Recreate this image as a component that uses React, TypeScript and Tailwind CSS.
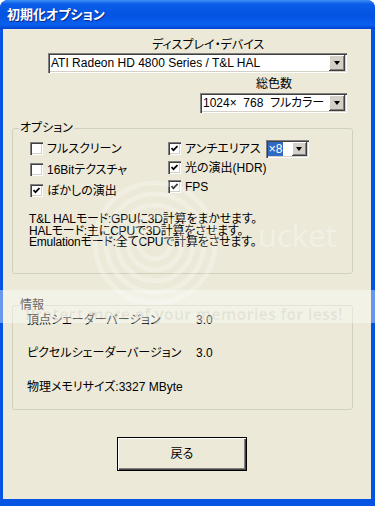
import type { ReactNode } from "react";

const DropButton = ({ className = "" }: { className?: string }) => (
  <div
    className={`flex items-center justify-center bg-[#D4D0C8] shadow-[inset_-1px_-1px_0_#404040,inset_1px_1px_0_#ffffff,inset_-2px_-2px_0_#808080] ${className}`}
  >
    <div className="h-0 w-0 border-x-[3.5px] border-t-[4px] border-x-transparent border-t-black" />
  </div>
);

type ComboProps = {
  children: ReactNode;
  className?: string;
};

const Combo = ({ children, className = "" }: ComboProps) => (
  <div
    className={`flex items-center bg-white shadow-[inset_1px_1px_0_#808080,inset_2px_2px_0_#404040,inset_-1px_-1px_0_#ffffff,inset_-2px_-2px_0_#D4D0C8] ${className}`}
  >
    <div className="flex-1 pl-[3px] text-[12px] leading-[14px] whitespace-pre">{children}</div>
    <DropButton className="mr-[2px] h-[16px] w-[16px]" />
  </div>
);

const Check = ({ checked, label }: { checked?: boolean; label: ReactNode }) => (
  <div className="flex items-center gap-[4px]">
    <div className="flex h-[13px] w-[13px] items-center justify-center bg-white shadow-[inset_1px_1px_0_#808080,inset_2px_2px_0_#404040,inset_-1px_-1px_0_#ffffff,inset_-2px_-2px_0_#D4D0C8]">
      {checked && (
        <svg width="7" height="7" viewBox="0 0 7 7">
          <polyline points="0.5,3 2.5,5.2 6.5,1" fill="none" stroke="black" strokeWidth="1.7" />
        </svg>
      )}
    </div>
    <span className="text-[12px] leading-[14px] whitespace-nowrap">{label}</span>
  </div>
);

export default function App() {
  return (
    <div className="relative h-[506px] w-[375px] overflow-hidden bg-white font-['Liberation_Sans','Noto_Sans_CJK_JP',sans-serif] text-black [font-feature-settings:'palt']">
      <div className="flex h-full flex-col rounded-t-[8px] bg-[#0553E3]">
        {/* title bar */}
        <div className="flex h-[29px] items-center rounded-t-[8px] bg-[linear-gradient(to_bottom,#3D8FF5_0%,#0A5DE8_14%,#0453E4_55%,#0A60EE_85%,#0343D0_100%)] pl-[7px]">
          <span className="text-[13px] font-bold leading-[14px] text-white [text-shadow:1px_1px_0_#0A2A8A]">
            初期化オプション
          </span>
        </div>

        <div className="mb-[7px] ml-[3px] mr-[4px] flex flex-1 flex-col bg-[#ECE9D8]">
          <div className="pl-[149px] pt-[9px] text-[12px] leading-[14px]">ディスプレイ・デバイス</div>
          <Combo className="ml-[45px] mt-[1px] h-[20px] w-[299px]">ATI Radeon HD 4800 Series / T&amp;L HAL</Combo>

          <div className="mt-[4px] pl-[253px] text-[12px] leading-[14px]">総色数</div>
          <Combo className="ml-[197px] mt-[2px] h-[20px] w-[147px]">{"1024×  768  フルカラー"}</Combo>

          {/* options group */}
          <fieldset className="ml-[9px] mt-[8px] h-[153px] w-[341px] rounded-[3px] border border-[#D0D0BF]">
            <legend className="ml-[6px] px-[1px] text-[12px] leading-[14px]">オプション</legend>
            <div className="flex items-start">
              <div className="flex w-[155px] flex-col pl-[17px] pt-[3px]">
                <div className="flex h-[21px] items-center">
                  <Check label="フルスクリーン" />
                </div>
                <div className="flex h-[21px] items-center">
                  <Check label="16Bitテクスチャ" />
                </div>
                <div className="flex h-[21px] items-center">
                  <Check checked label="ぼかしの演出" />
                </div>
              </div>
              <div className="flex flex-col pt-[4px]">
                <div className="flex h-[19px] items-center">
                  <Check checked label="アンチエリアス" />
                  <div className="ml-[5px] flex h-[18px] w-[43px] items-center bg-white shadow-[inset_1px_1px_0_#808080,inset_2px_2px_0_#404040,inset_-1px_-1px_0_#ffffff,inset_-2px_-2px_0_#D4D0C8]">
                    <span className="ml-[2px] bg-[#316AC5] px-[1px] text-[12px] leading-[14px] text-white">×8</span>
                    <DropButton className="ml-auto mr-[2px] h-[14px] w-[15px]" />
                  </div>
                </div>
                <div className="flex h-[19px] items-center">
                  <Check checked label="光の演出(HDR)" />
                </div>
                <div className="flex h-[19px] items-center">
                  <Check checked label="FPS" />
                </div>
              </div>
            </div>
            <div className="mt-[13px] pl-[16px] text-[12px] leading-[11.5px] tracking-[-0.2px]">
              <div>T&amp;L HALモード:GPUに3D計算をまかせます。</div>
              <div>HALモード:主にCPUで3D計算をさせます。</div>
              <div>Emulationモード:全てCPUで計算をさせます。</div>
            </div>
          </fieldset>

          {/* info group */}
          <fieldset className="ml-[9px] mt-[24px] h-[112px] w-[341px] rounded-[3px] border border-[#D0D0BF]">
            <legend className="ml-[6px] px-[1px] text-[12px] leading-[14px]">情報</legend>
            <div className="pl-[14px] text-[12px] leading-[14px]">
              <div className="mt-[1px] flex">
                <span className="w-[169px]">頂点シェーダーバージョン</span>
                <span>3.0</span>
              </div>
              <div className="mt-[19px] flex">
                <span className="w-[169px]">ピクセルシェーダーバージョン</span>
                <span>3.0</span>
              </div>
              <div className="mt-[20px]">物理メモリサイズ:3327 MByte</div>
            </div>
          </fieldset>

          <button className="ml-[114px] mt-[27px] flex h-[34px] w-[130px] items-center justify-center border border-black bg-[#ECE9D8] text-[12px] leading-[14px] shadow-[inset_1px_1px_0_#ffffff,inset_-1px_-1px_0_#404040,inset_-2px_-2px_0_#808080]">
            戻る
          </button>
        </div>
      </div>

      {/* faint photobucket watermark */}
      <svg className="pointer-events-none absolute left-[90px] top-[178px]" width="130" height="130" viewBox="0 0 130 130">
        {[16, 27, 38, 49, 60].map((r) => (
          <circle key={r} cx="65" cy="65" r={r} fill="none" stroke="#ffffff" strokeOpacity="0.25" strokeWidth="5" />
        ))}
      </svg>
      <div className="pointer-events-none absolute left-[258px] top-[219px] font-['Open_Sans',sans-serif] text-[31px] leading-[32px] text-white/35">
        ucket
      </div>
      <div className="pointer-events-none absolute left-0 right-0 top-[290px] flex h-[33px] items-end bg-white/40 pl-[25px]">
        <span className="whitespace-nowrap font-['Open_Sans',sans-serif] text-[16px] font-bold leading-[18px] text-black/[0.06]">
          Protect more of your memories for less!
        </span>
      </div>
    </div>
  );
}
